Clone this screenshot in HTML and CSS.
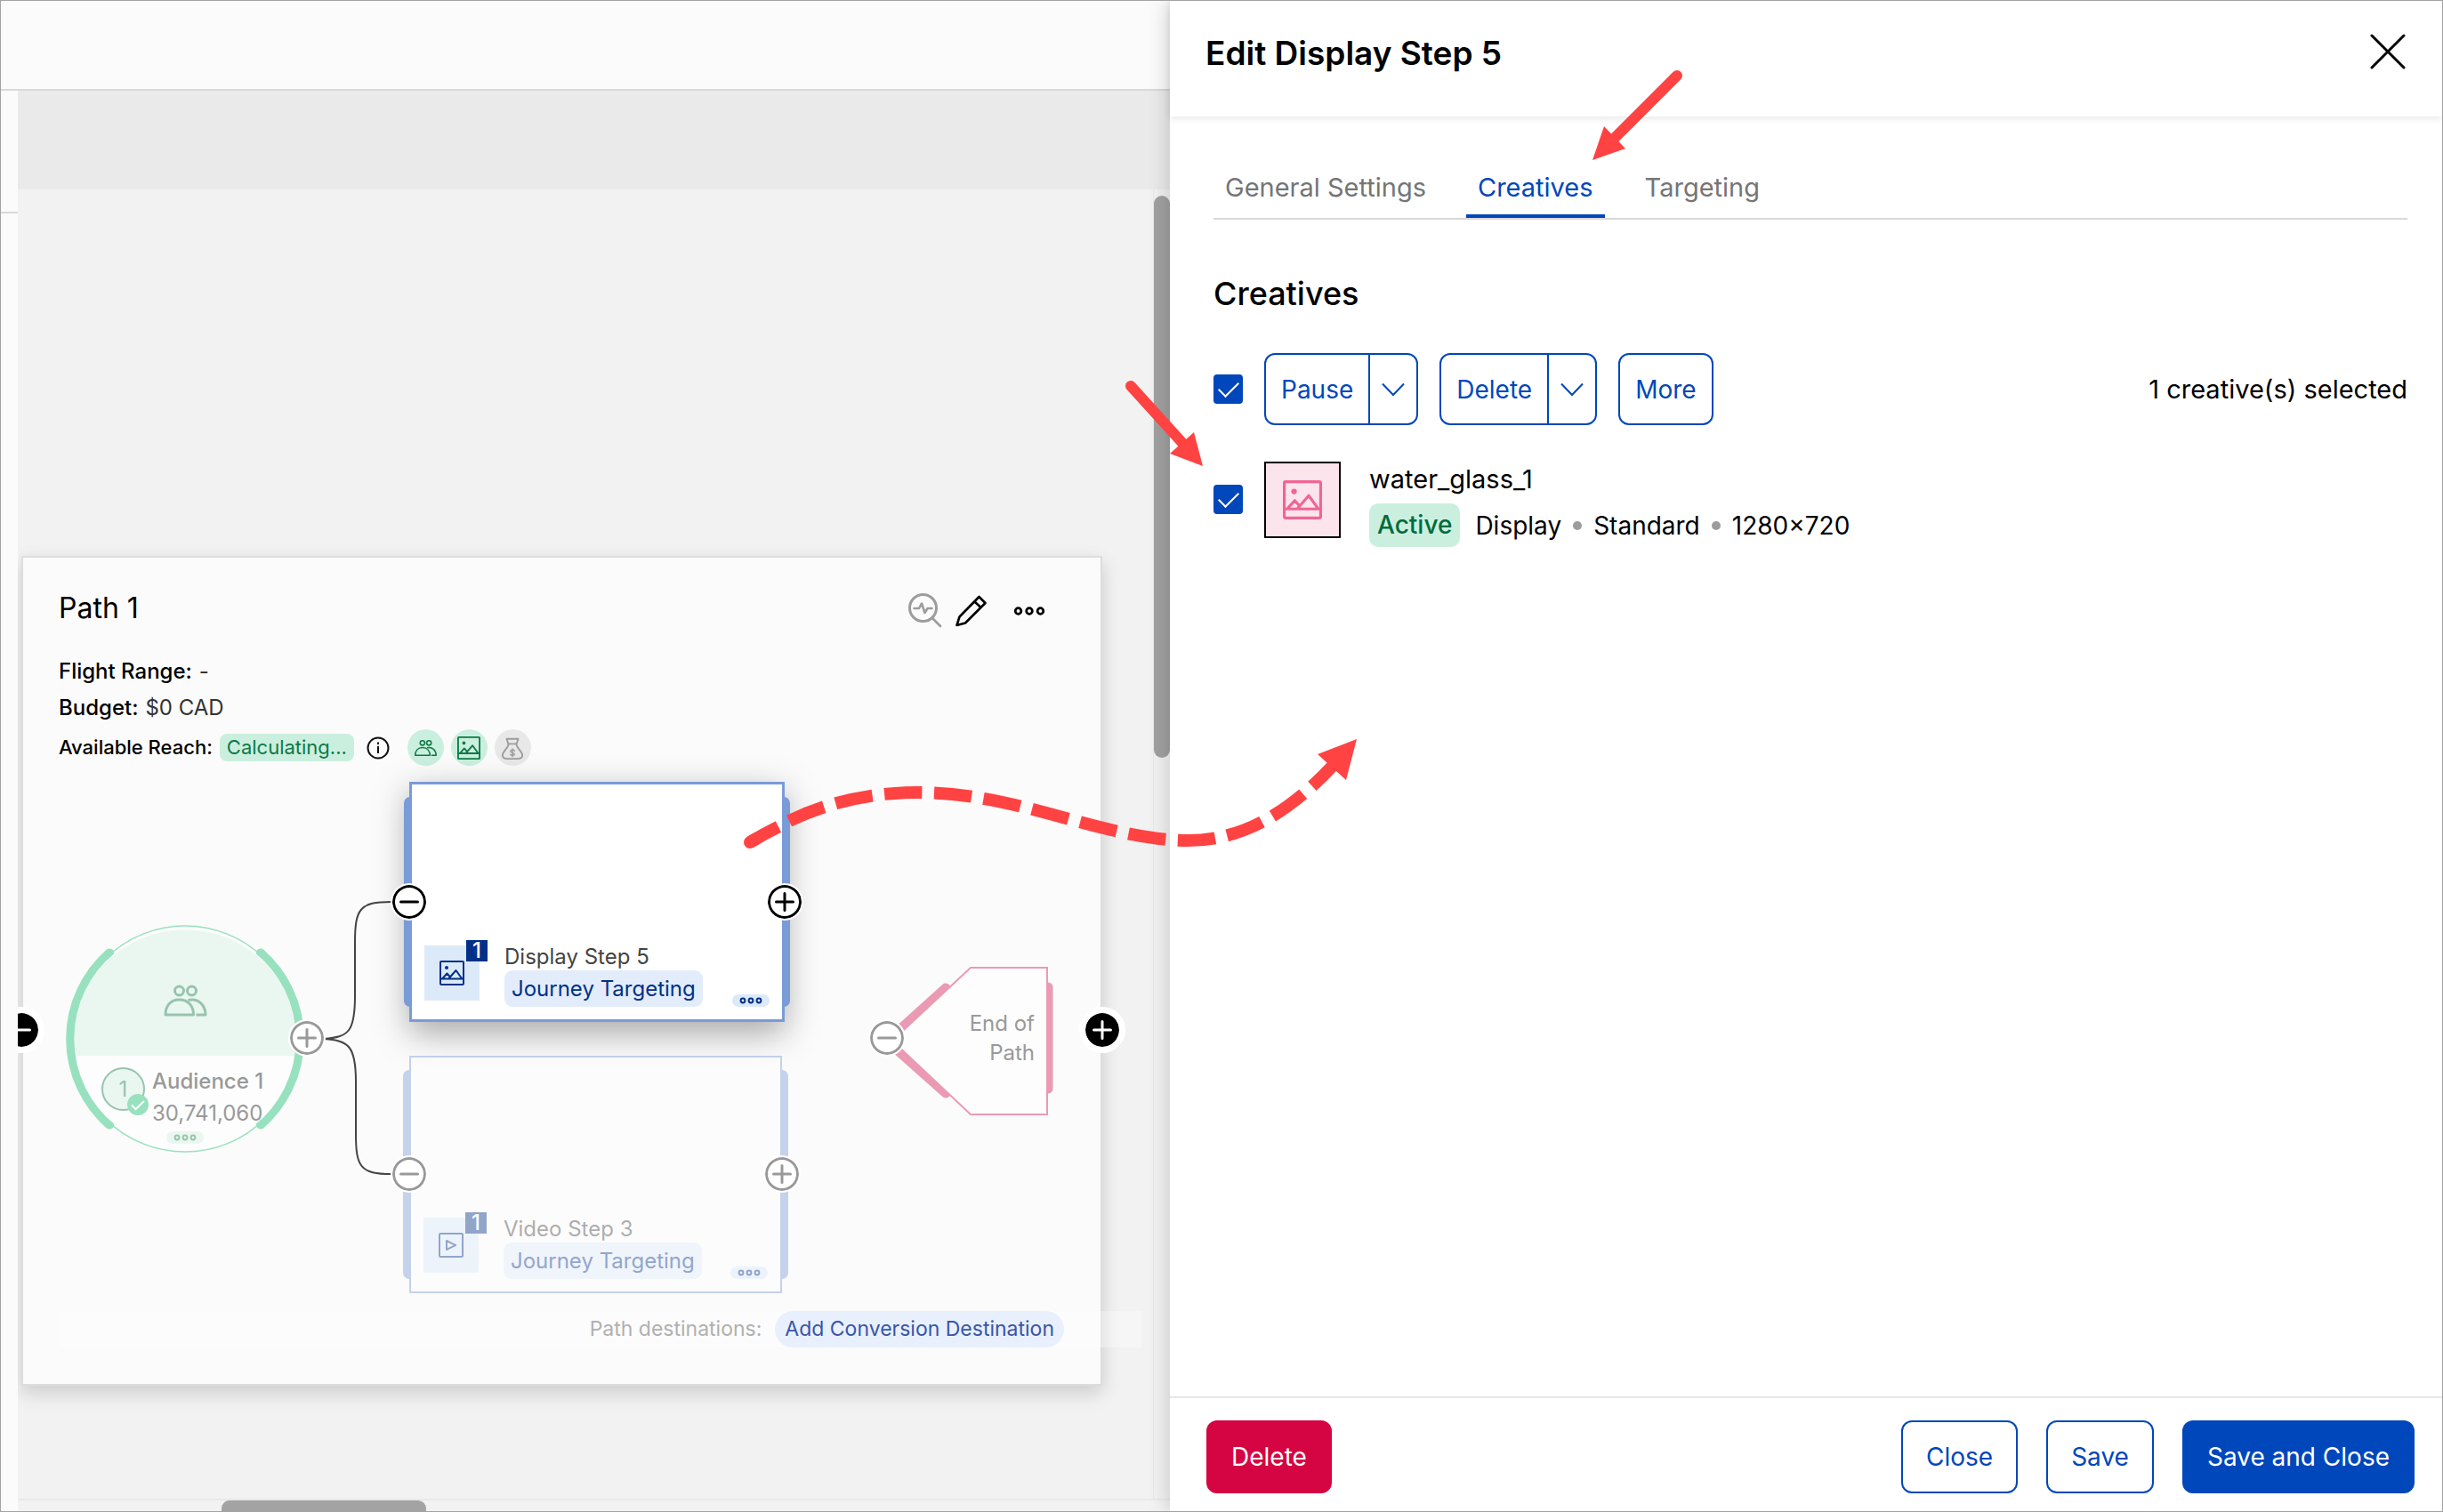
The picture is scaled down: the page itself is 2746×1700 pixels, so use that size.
FILE: index.html
```html
<!DOCTYPE html>
<html lang="en">
<head>
<meta charset="utf-8">
<title>Edit Display Step 5</title>
<link rel="stylesheet" href="styles.css">
</head>
<body>
<svg class="sprite" aria-hidden="true">
  <symbol id="i-people" viewBox="0 0 48 36">
    <g fill="none" stroke="currentColor" stroke-width="3" stroke-linejoin="round">
      <circle cx="17" cy="7" r="5"/><circle cx="31" cy="7" r="5"/>
      <path d="M1.500 34C1.500 24 7 17 17 17S33 24 33 34Z"/>
      <path d="M27 17.500C39 14.500 46.500 24 46.500 34H36"/>
    </g>
  </symbol>
  <symbol id="i-image" viewBox="0 0 28 28">
    <g fill="none" stroke="currentColor" stroke-width="2" stroke-linejoin="round">
      <rect x="1" y="1" width="26" height="26" rx="1"/>
      <path d="M1 20.500H27M3.500 20L8.500 14.500L12 18.500L18.500 11L25 20M12 18.500L10.500 20"/>
    </g>
    <circle cx="8" cy="8" r="2" fill="currentColor"/>
  </symbol>
  <symbol id="i-video" viewBox="0 0 28 28">
    <g fill="none" stroke="currentColor" stroke-width="2" stroke-linejoin="round">
      <rect x="1" y="1" width="26" height="26" rx="1"/>
      <path d="M9 9L19 14L9 19Z"/>
    </g>
  </symbol>
  <symbol id="i-dots" viewBox="0 0 26 10">
    <g fill="none" stroke="currentColor" stroke-width="2">
      <circle cx="4" cy="5" r="2.400"/><circle cx="13" cy="5" r="2.400"/><circle cx="22" cy="5" r="2.400"/>
    </g>
  </symbol>
  <symbol id="i-bag" viewBox="0 0 28 28">
    <g fill="none" stroke="currentColor" stroke-width="2" stroke-linejoin="round" stroke-linecap="round">
      <path d="M7 3H21L19 9H9Z"/>
      <path d="M9.500 9C8.500 15 2 18 2 23Q2 27 7 27H21Q26 27 26 23C26 18 19.500 15 18.500 9"/>
      <path d="M16.500 17.500C15 15.500 11.500 16 11.500 18S16.500 19.500 16.500 21.500S12.500 23.500 11.500 22M14 15V24.500" stroke-width="1.500"/>
    </g>
  </symbol>
  <symbol id="i-minus" viewBox="0 0 42 42"><path d="M11.500 21H30.500" stroke="currentColor" stroke-width="3" stroke-linecap="round"/></symbol>
  <symbol id="i-plus" viewBox="0 0 42 42"><path d="M11.500 21H30.500M21 11.500V30.500" stroke="currentColor" stroke-width="3" stroke-linecap="round"/></symbol>
  <symbol id="i-chevron" viewBox="0 0 26 16"><path d="M1 1.500L13 14L25 1.500" fill="none" stroke="currentColor" stroke-width="2"/></symbol>
</svg>

<div class="app">
  <main class="workspace">
    <header class="topbar"></header>
    <div class="stage">
      <aside class="rail"></aside>
      <div class="board">
        <div class="band"></div>
        <div class="canvas">
          <section class="path-card">
            <div class="path-info">
              <div class="path-head">
                <h1>Path 1</h1>
                <div class="path-tools">
                  <button type="button" class="tool tool-muted" aria-label="Inspect">
                    <svg width="40" height="40" viewBox="0 0 40 40" fill="none" stroke="currentColor" stroke-width="3" stroke-linecap="round" stroke-linejoin="round"><circle cx="18.500" cy="16.500" r="15"/><path d="M29 28L38 37M8.500 17H14L17 11.500L20.500 22L23.500 17H28.500" stroke-width="2.600"/></svg>
                  </button>
                  <button type="button" class="tool" aria-label="Edit path">
                    <svg width="40" height="40" viewBox="0 0 40 40" fill="none" stroke="currentColor" stroke-width="2.600" stroke-linejoin="round"><path d="M4.500 36L7.500 26.500L29.500 4L36.500 11L14 33.500ZM24.500 9.500L31.500 16"/></svg>
                  </button>
                  <button type="button" class="tool tool-more" aria-label="Path options">
                    <svg width="36" height="14" viewBox="0 0 26 10"><use href="#i-dots"/></svg>
                  </button>
                </div>
              </div>
              <dl class="facts">
                <div class="fact"><dt>Flight Range:</dt><dd>-</dd></div>
                <div class="fact"><dt>Budget:</dt><dd>$0 CAD</dd></div>
                <div class="fact fact-reach">
                  <dt>Available Reach:</dt>
                  <dd class="reach">
                    <span class="calc">Calculating...</span>
                    <svg class="info" width="26" height="26" viewBox="0 0 26 26" fill="none" stroke="currentColor" stroke-width="2"><circle cx="13" cy="13" r="11.500"/><path d="M13 11V19M13 6.500V9"/></svg>
                    <span class="dot-icon"><svg width="25" height="20"><use href="#i-people"/></svg></span>
                    <span class="dot-icon"><svg width="26" height="26"><use href="#i-image"/></svg></span>
                    <span class="dot-icon dot-icon-off"><svg width="26" height="26"><use href="#i-bag"/></svg></span>
                  </dd>
                </div>
              </dl>
            </div>

            <div class="diagram">
              <svg class="links" viewBox="26 862 430 612" width="430" height="612" fill="none" stroke="#444" stroke-width="2">
                <path d="M364 1168C392 1166 399 1160 399 1120V1060C399 1022 404 1014 440 1014"/>
                <path d="M364 1168C392 1170 400 1176 400 1216V1275C400 1312 405 1320 440 1320"/>
              </svg>

              <div class="node audience">
                <svg class="shape" width="266" height="256" viewBox="75 1040 266 256" fill="none">
                  <g stroke="#98e1bf" stroke-width="11" stroke-linecap="round">
                    <path d="M123 1072A128 128 0 0 0 123 1264"/>
                    <path d="M293 1072A128 128 0 0 1 293 1264"/>
                  </g>
                  <circle cx="208" cy="1168" r="126" fill="#fdfdfd"/>
                  <path d="M83 1187A126 126 0 1 1 333 1187Z" fill="#eaf7f0"/>
                  <circle cx="208" cy="1168" r="127" stroke="#98e1bf" stroke-width="1.500"/>
                  <path d="M127 1070A127 127 0 0 0 127 1266M289 1070A127 127 0 0 1 289 1266" stroke="#98e1bf" stroke-width="5"/>
                </svg>
                <svg class="audience-icon" width="49" height="36"><use href="#i-people"/></svg>
                <span class="audience-rank">1
                  <svg class="audience-check" width="24" height="24" viewBox="0 0 24 24"><circle cx="12" cy="12" r="12" fill="#98e1bf"/><path d="M5 12.500L9.500 17L19 8" fill="none" stroke="#fff" stroke-width="2"/></svg>
                </span>
                <div class="audience-text"><div>Audience 1</div><div>30,741,060</div></div>
                <button type="button" class="more more-green" aria-label="Audience options"><svg width="26" height="10"><use href="#i-dots"/></svg></button>
              </div>

              <article class="node step step-active">
                <span class="step-icon"><svg width="28" height="28"><use href="#i-image"/></svg><b class="step-count">1</b></span>
                <div class="step-text"><div class="step-name">Display Step 5</div><span class="step-tag">Journey Targeting</span></div>
                <button type="button" class="more" aria-label="Step options"><svg width="26" height="10"><use href="#i-dots"/></svg></button>
              </article>

              <article class="node step step-video">
                <span class="step-icon"><svg width="28" height="28"><use href="#i-video"/></svg><b class="step-count">1</b></span>
                <div class="step-text"><div class="step-name">Video Step 3</div><span class="step-tag">Journey Targeting</span></div>
                <button type="button" class="more" aria-label="Step options"><svg width="26" height="10"><use href="#i-dots"/></svg></button>
              </article>

              <div class="node end">
                <svg class="shape" width="180" height="166" viewBox="1003 1088 180 166">
                  <g fill="none" stroke="#eb9ab4" stroke-width="11" stroke-linecap="round">
                    <path d="M1000 1168L1063 1111M1000 1173L1063 1229"/><path d="M1178 1110V1224"/>
                  </g>
                  <path d="M1091 1088H1177V1253H1091L1003 1170Z" fill="#fdfdfd" stroke="#eb9ab4" stroke-width="2"/>
                </svg>
                <div class="end-text">End of<br>Path</div>
              </div>

              <button type="button" class="port port-muted p-audience" aria-label="Add after audience"><svg><use href="#i-plus"/></svg></button>
              <button type="button" class="port p-step-in" aria-label="Remove input"><svg><use href="#i-minus"/></svg></button>
              <button type="button" class="port p-step-out" aria-label="Add output"><svg><use href="#i-plus"/></svg></button>
              <button type="button" class="port port-muted p-video-in" aria-label="Remove input"><svg><use href="#i-minus"/></svg></button>
              <button type="button" class="port port-muted p-video-out" aria-label="Add output"><svg><use href="#i-plus"/></svg></button>
              <button type="button" class="port port-muted p-end" aria-label="Remove input"><svg><use href="#i-minus"/></svg></button>
              <button type="button" class="port port-solid p-card-in" aria-label="Remove path input"><svg><use href="#i-minus"/></svg></button>
              <button type="button" class="port port-solid p-card-out" aria-label="Add path output"><svg><use href="#i-plus"/></svg></button>
            </div>

            <footer class="destinations">
              <span>Path destinations:</span>
              <button type="button">Add Conversion Destination</button>
            </footer>
          </section>
        </div>
        <div class="vbar"><div class="vthumb"></div></div>
        <div class="hbar"><div class="hthumb"></div></div>
      </div>
    </div>
  </main>

  <section class="drawer" aria-label="Edit Display Step 5">
    <header class="drawer-head">
      <h2>Edit Display Step 5</h2>
      <button type="button" class="drawer-x" aria-label="Dismiss">
        <svg width="40" height="40" viewBox="0 0 40 40" stroke="#000" stroke-width="3" stroke-linecap="round"><path d="M2 2L38 38M38 2L2 38"/></svg>
      </button>
    </header>
    <div class="drawer-body">
      <nav class="tabs">
        <a href="#general">General Settings</a>
        <a href="#creatives" class="tab-on">Creatives</a>
        <a href="#targeting">Targeting</a>
      </nav>
      <h3>Creatives</h3>
      <div class="toolbar">
        <input type="checkbox" class="check" checked aria-label="Select all creatives">
        <div class="split"><button type="button">Pause</button><button type="button" class="caret" aria-label="More pause options"><svg width="26" height="16"><use href="#i-chevron"/></svg></button></div>
        <div class="split"><button type="button">Delete</button><button type="button" class="caret" aria-label="More delete options"><svg width="26" height="16"><use href="#i-chevron"/></svg></button></div>
        <div class="split"><button type="button">More</button></div>
        <span class="selected">1 creative(s) selected</span>
      </div>
      <div class="creative">
        <input type="checkbox" class="check" id="creative-1" checked>
        <span class="thumb"><svg width="44" height="44"><use href="#i-image"/></svg></span>
        <div class="creative-text">
          <label for="creative-1">water_glass_1</label>
          <div class="creative-meta"><span class="status">Active</span><span>Display</span><i></i><span>Standard</span><i></i><span>1280×720</span></div>
        </div>
      </div>
    </div>
    <footer class="drawer-foot">
      <button type="button" class="btn btn-danger">Delete</button>
      <button type="button" class="btn">Close</button>
      <button type="button" class="btn">Save</button>
      <button type="button" class="btn btn-primary">Save and Close</button>
    </footer>
  </section>

  <svg class="callouts" viewBox="0 0 2746 1700" aria-hidden="true" fill="#ff4343">
    <g fill="none" stroke="#ff4343" stroke-width="12" stroke-linecap="round">
      <path d="M1885 85L1814 156"/><path d="M1271 434L1330 499"/>
    </g>
    <path d="M1790 180L1803 142L1827 167Z"/>
    <path d="M1352 524L1342 486L1315 510Z"/>
    <g fill="none" stroke="#ff4343" stroke-width="14">
      <path d="M843 947L850 943" stroke-linecap="round"/>
      <path d="M843 947Q858 938 875 929.500"/>
      <path d="M887 923C935 900 985 890.500 1035 891C1085 891.500 1132 902 1180 915C1234 930 1288 945 1335 945C1400 945 1452 910 1498 861" stroke-dasharray="42.300 13.600"/>
    </g>
    <path d="M1525 831L1481 848L1513 877Z"/>
  </svg>
</div>
</body>
</html>
```

FILE: styles.css
```css
* { box-sizing: border-box; }

body {
  margin: 0;
  font-family: Inter, "Liberation Sans", sans-serif;
  font-size: 28px;
  line-height: 34px;
  color: #000;
}

h1, h2, h3, dl, dd { margin: 0; }
svg { display: block; }
.sprite { position: absolute; width: 0; height: 0; }

button {
  margin: 0;
  padding: 0;
  border: 0;
  background: none;
  font: inherit;
  color: inherit;
}

.app {
  position: relative;
  display: grid;
  grid-template-columns: minmax(0, 1314fr) minmax(0, 1430fr);
  min-height: 100vh;
  border: 1px solid #a3a3a3;
  overflow: hidden;
}

/* Workspace behind the drawer */
.workspace { display: flex; flex-direction: column; background: #fbfbfb; }
.topbar { height: 101px; border-bottom: 2px solid #d9d9d9; }
.stage { flex: 1; display: flex; }
.rail { width: 19px; }
.rail::before { content: ""; display: block; height: 136px; border-bottom: 2px solid #d9d9d9; }

.board {
  flex: 1;
  min-width: 0;
  display: grid;
  grid-template-columns: minmax(0, 1fr) 19px;
  grid-template-rows: 111px 1fr 14px;
  background: #f2f2f2;
}
.band { grid-column: 1 / -1; background: #eaeaea; }
.canvas { padding: 412px 57px 40px 4px; overflow: hidden; }
.vbar { padding-top: 7px; border-left: 1px solid #e8e8e8; }
.vthumb { height: 632px; border-radius: 9px; background: #a1a1a1; }
.hbar { grid-column: 1 / -1; border-top: 2px solid #e8e8e8; }
.hthumb { width: 230px; height: 12px; margin-left: 229px; border-radius: 9px 9px 0 0; background: #a3a3a3; }

/* Path card */
.path-card {
  border: 2px solid #ddd;
  background: #fbfbfb;
  box-shadow: 0 8px 20px rgba(0, 0, 0, .16);
}
.path-info { padding: 37px 62px 1px 40px; }
.path-head { display: flex; justify-content: space-between; height: 40px; }
.path-head h1 { font-size: 32px; line-height: 40px; font-weight: 400; }
.path-tools { display: flex; align-items: center; gap: 12px; padding-top: 6px; }
.tool-muted { color: #9c9c9c; }
.tool-more { margin-left: 16px; }

.facts { margin-top: 30px; font-size: 24px; line-height: 41px; }
.fact { display: flex; gap: 8px; }
.fact dt { font-weight: 500; }
.fact dd { color: #333; }
.fact-reach { margin-top: 4px; align-items: center; font-size: 22px; }
.fact .reach { display: flex; align-items: center; gap: 8px; color: #111; }
.calc { padding: 0 8px; border-radius: 8px; background: #cbefdf; color: #0b7a45; line-height: 31px; }
.info { margin: 0 12px 0 6px; }
.dot-icon {
  display: grid;
  place-items: center;
  width: 41px;
  height: 41px;
  border-radius: 50%;
  background: #cbefdf;
  color: #0b7a45;
}
.dot-icon-off { background: #e8e8e8; color: #9c9c9c; }

/* Diagram: nodes sit at free coordinates */
.diagram { position: relative; height: 612px; font-size: 24px; }
.links { position: absolute; left: 0; top: 0; }
.node { position: absolute; }
.shape { overflow: visible; }

.more {
  display: grid;
  place-items: center;
  width: 42px;
  height: 14px;
  border-radius: 7px;
  background: #dce9f9;
  color: #003087;
}
.more-green { background: #eaf7f0; color: #97c4ae; }

.audience { left: 49px; top: 178px; color: #999; }
.audience-icon { position: absolute; left: 109px; top: 67px; color: #97c4ae; }
.audience-rank {
  position: absolute;
  left: 39px;
  top: 160px;
  width: 49px;
  height: 49px;
  border: 2px solid #97c4ae;
  border-radius: 50%;
  background: #eaf7f0;
  color: #97c4ae;
  line-height: 45px;
  text-align: center;
}
.audience-check { position: absolute; left: 27px; top: 28px; }
.audience-text { position: absolute; left: 96px; top: 158px; line-height: 36px; }
.audience-text div:first-child { font-weight: 500; }
.audience .more { position: absolute; left: 112px; top: 232px; }

.step {
  left: 434px;
  display: flex;
  align-items: flex-end;
  padding: 14px;
  background: #fff;
  color: #444;
}
.step::before, .step::after {
  content: "";
  position: absolute;
  top: 14px;
  bottom: 14px;
  width: 9px;
  background: #799bd8;
}
.step::before { left: -9px; border-radius: 7px 0 0 7px; }
.step::after { right: -9px; border-radius: 0 7px 7px 0; }
.step-active {
  top: 17px;
  width: 422px;
  height: 270px;
  border: 3px solid #799bd8;
  box-shadow: 0 12px 36px rgba(0, 0, 0, .34);
}
.step-video {
  top: 325px;
  width: 419px;
  height: 267px;
  border: 2px solid #799bd8;
  opacity: .42;
}
.step-icon {
  position: relative;
  display: grid;
  place-items: center;
  width: 62px;
  height: 62px;
  margin-bottom: 7px;
  background: #dce9f9;
  color: #003087;
}
.step-count {
  position: absolute;
  right: -9px;
  top: -6px;
  width: 24px;
  height: 24px;
  background: #003087;
  color: #fff;
  line-height: 24px;
  font-weight: 500;
  text-align: center;
}
.step-text { margin-left: 28px; }
.step-name { line-height: 30px; }
.step-tag {
  display: block;
  padding: 0 8px;
  border-radius: 9px;
  background: #e2ecfb;
  color: #003087;
  line-height: 41px;
}
.step .more { margin-left: auto; }

.end { left: 977px; top: 226px; }
.end-text {
  position: absolute;
  right: 20px;
  top: 46px;
  width: 90px;
  color: #999;
  line-height: 33px;
  text-align: right;
}

.port {
  position: absolute;
  width: 42px;
  height: 42px;
  border: 2px solid #fff;
  border-radius: 50%;
  background: #fff;
  color: #000;
  box-shadow: inset 0 0 0 3px currentColor;
}
.port svg { width: 42px; height: 42px; margin: -2px; }
.port-muted { color: #999; }
.port-solid {
  width: 52px;
  height: 52px;
  border: 7px solid #fff;
  background: #000 padding-box;
  color: #fff;
  box-shadow: none;
}
.p-audience { left: 298px; top: 284px; }
.p-step-in { left: 413px; top: 131px; }
.p-step-out { left: 835px; top: 131px; }
.p-video-in { left: 413px; top: 437px; }
.p-video-out { left: 832px; top: 437px; }
.p-end { left: 950px; top: 284px; }
.p-card-in { left: -28px; top: 270px; }
.p-card-out { right: -28px; top: 270px; }

.destinations {
  display: flex;
  justify-content: flex-end;
  gap: 15px;
  margin: 0 -46px 41px 41px;
  padding-right: 87px;
  background: rgba(255, 255, 255, .3);
  font-size: 23px;
  line-height: 41px;
  color: #b0b0b0;
}
.destinations button { padding: 0 11px; border-radius: 21px; background: #e8f0fd; color: #3a55a8; }

/* Drawer */
.drawer {
  position: relative;
  display: flex;
  flex-direction: column;
  background: #fff;
  box-shadow: 0 0 24px rgba(0, 0, 0, .2);
}
.drawer-head {
  display: flex;
  justify-content: space-between;
  align-items: flex-start;
  padding: 37px 41px 49px 40px;
  box-shadow: 0 2px 8px rgba(0, 0, 0, .1);
}
.drawer-head h2 { font-size: 37px; line-height: 44px; font-weight: 600; }
.drawer-body { flex: 1; padding: 63px 39px 0 49px; }

.tabs { display: flex; gap: 32px; border-bottom: 2px solid #d9d9d9; font-size: 29px; }
.tabs a {
  padding: 0 13px 13px;
  border-bottom: 4px solid transparent;
  color: #757575;
  text-decoration: none;
}
.tabs .tab-on { border-color: #0047bb; color: #0047bb; }

.drawer-body h3 { margin-top: 61px; font-size: 36px; line-height: 44px; font-weight: 500; }

.toolbar { display: flex; align-items: center; gap: 24px; margin-top: 45px; }
.check {
  appearance: none;
  display: grid;
  place-items: center;
  width: 33px;
  height: 33px;
  margin: 0;
  border-radius: 4px;
  background: #0047bb;
}
.check::before {
  content: "";
  width: 20px;
  height: 10px;
  margin-top: -6px;
  border: solid #fff;
  border-width: 0 0 2px 2px;
  transform: rotate(-45deg);
}
.split {
  display: flex;
  height: 81px;
  border: 2px solid #0047bb;
  border-radius: 12px;
  color: #0047bb;
}
.split button { padding: 0 17px; }
.split .caret { padding: 0 13px; border-left: 2px solid #0047bb; }
.selected { margin-left: auto; font-size: 29px; }

.creative { display: flex; align-items: flex-start; margin-top: 41px; }
.creative .check { margin: 26px 24px 0 0; }
.thumb {
  display: grid;
  place-items: center;
  width: 86px;
  height: 86px;
  border: 2px solid #000;
  background: #fce4ec;
  color: #f06595;
}
.creative-text { padding: 3px 0 0 32px; }
.creative-text label { display: block; font-size: 29px; }
.creative-meta { display: flex; align-items: center; gap: 13px; margin-top: 10px; }
.creative-meta i { width: 10px; height: 10px; border-radius: 50%; background: #9c9c9c; }
.status {
  margin-right: 4px;
  padding: 0 9px;
  border-radius: 10px;
  background: #cbefdf;
  color: #006b3c;
  font-weight: 500;
  line-height: 49px;
}

.drawer-foot {
  display: flex;
  gap: 32px;
  padding: 25px 31px 20px 41px;
  border-top: 2px solid #e6e6e6;
}
.btn {
  height: 82px;
  padding: 0 26px;
  border: 2px solid #0047bb;
  border-radius: 12px;
  background: #fff;
  color: #0047bb;
}
.btn-primary { background: #0047bb; color: #fff; }
.btn-danger { margin-right: auto; border-color: #d50543; background: #d50543; color: #fff; }

/* Annotation arrows drawn over the whole view */
.callouts {
  position: absolute;
  left: -1px;
  top: -1px;
  width: calc(100% + 2px);
  height: auto;
  pointer-events: none;
}
```
